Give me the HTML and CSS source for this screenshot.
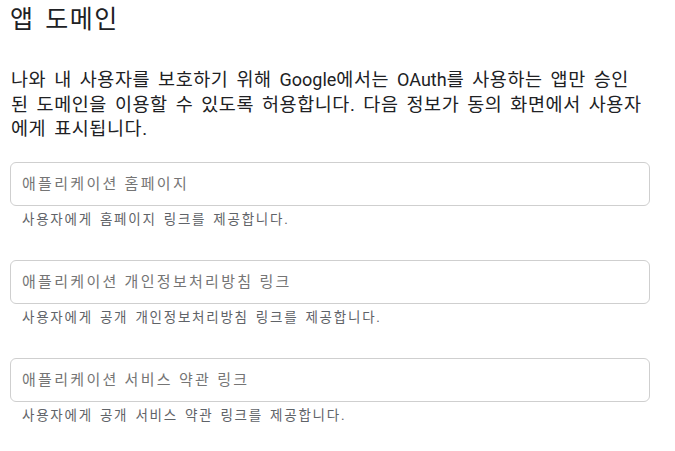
FILE: index.html
```html
<!DOCTYPE html>
<html lang="ko">
<head>
<meta charset="utf-8">
<link rel="stylesheet" href="styles.css">
</head>
<body>
<main class="page">
  <h1 class="title">앱 도메인</h1>
  <p class="intro">나와 내 사용자를 보호하기 위해 <span class="latin">Google</span>에서는 <span class="latin">OAuth</span>를 사용하는 앱만 승인된 도메인을 이용할 수 있도록 허용합니다. 다음 정보가 동의 화면에서 사용자에게 표시됩니다.</p>
  <div class="field">
    <input class="input" type="text" placeholder="애플리케이션 홈페이지">
    <div class="hint">사용자에게 홈페이지 링크를 제공합니다.</div>
  </div>
  <div class="field">
    <input class="input" type="text" placeholder="애플리케이션 개인정보처리방침 링크">
    <div class="hint">사용자에게 공개 개인정보처리방침 링크를 제공합니다.</div>
  </div>
  <div class="field">
    <input class="input" type="text" placeholder="애플리케이션 서비스 약관 링크">
    <div class="hint">사용자에게 공개 서비스 약관 링크를 제공합니다.</div>
  </div>
</main>
</body>
</html>
```
FILE: styles.css
```css
html, body {
  margin: 0;
  padding: 0;
  background: #fff;
}
body {
  font-family: Roboto, "Noto Sans CJK KR", sans-serif;
  color: #202124;
}
.page {
  width: 640px;
  padding: 0 0 0 10px;
}
.title {
  margin: 0;
  padding: 4px 0 0 0;
  font-size: 25px;
  font-weight: 400;
  line-height: 32px;
  letter-spacing: 1.5px;
  word-spacing: 3px;
}
.intro {
  width: 631px;
  margin: 32px 0 0 1px;
  font-size: 18.5px;
  line-height: 24.5px;
  letter-spacing: 0.6px;
  word-spacing: 2.7px;
  color: #202124;
}
.latin {
  font-size: 18px;
  letter-spacing: 0;
}
.field {
  margin-top: 20px;
  margin-bottom: 31px;
}
.input {
  display: block;
  box-sizing: border-box;
  width: 640px;
  height: 44px;
  margin: 0;
  padding: 0 11px;
  border: 1px solid #cfcfcf;
  border-radius: 6px;
  font-family: Roboto, "Noto Sans CJK KR", sans-serif;
  font-size: 15px;
  letter-spacing: 2.3px;
  word-spacing: 0;
  color: #202124;
  background: #fff;
  outline: none;
}
.input::placeholder {
  color: #757575;
}
.hint {
  padding: 3px 0 0 12px;
  font-size: 13.5px;
  line-height: 20px;
  letter-spacing: 1.75px;
  word-spacing: 2px;
  color: #5f6368;
}
```
